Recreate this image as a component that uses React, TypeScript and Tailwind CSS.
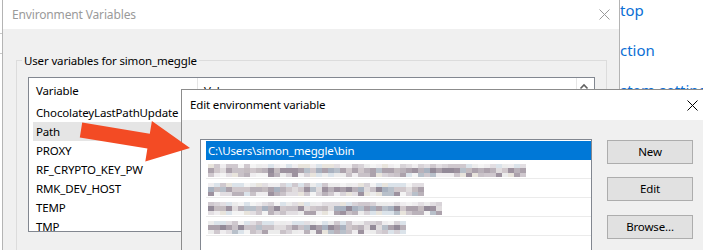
import React from "react";

function rng(seed: number) {
  let s = seed;
  return () => {
    s = (s * 1103515245 + 12345) & 0x7fffffff;
    return s / 0x7fffffff;
  };
}

const light = ["#f4f4f4", "#ececec", "#e2dee2", "#d8d3d8", "#e8e4dc", "#dbe3ea", "#efedef", "#cfc8ce"];
const mid = ["#c9c2c8", "#bab2ba", "#aca2ac", "#9d929f", "#b8c0ca", "#a9b2c0", "#d0c8cc", "#938a98", "#c4bcc0", "#e0dcde"];

function Mosaic({ width, seed }: { width: number; seed: number }) {
  const r = rng(seed);
  const cols = Math.ceil(width / 6);
  const layers = [
    { y: 0, h: 4, pal: light },
    { y: 4, h: 5, pal: mid },
    { y: 9, h: 4, pal: light.concat(mid.slice(0, 5)) },
  ];
  const rects: React.ReactElement[] = [];
  for (let c = 0; c < cols; c++) {
    layers.forEach((l, li) => {
      const col = l.pal[Math.floor(r() * l.pal.length)];
      rects.push(
        <rect key={c + "-" + li} x={c * 6} y={l.y} width={6} height={l.h} fill={col} />
      );
    });
  }
  return (
    <svg width={cols * 6} height={13} className="block">
      {rects}
    </svg>
  );
}

const vars = ["ChocolateyLastPathUpdate", "Path", "PROXY", "RF_CRYPTO_KEY_PW", "RMK_DEV_HOST", "TEMP", "TMP"];

export default function App() {
  return (
    <div className="relative w-[703px] h-[250px] overflow-hidden bg-white font-['Noto_Sans',sans-serif] text-[11.5px] tracking-[-0.15px] text-black leading-none">
      <div className="flex h-full">
        {/* sliver of window behind */}
        <div className="w-[2px] shrink-0 bg-white flex flex-col">
          <div className="mt-[33px] h-px bg-[#c8c8c8]" />
          <div className="mt-[19px] h-px bg-[#c8c8c8]" />
        </div>

        {/* Environment Variables window */}
        <div className="w-[618px] shrink-0 border-x border-[#b4b4b4] flex flex-col overflow-hidden">
          <div className="h-[29px] shrink-0 bg-white flex items-center justify-between pl-[9px]">
            <span className="text-[#9a9a9a] text-[12px]">Environment Variables</span>
            <svg width="11" height="11" className="mr-[9px]">
              <path d="M0.5 0.5 L10.5 10.5 M10.5 0.5 L0.5 10.5" stroke="#9a9a9a" strokeWidth="1" />
            </svg>
          </div>
          <div className="flex-1 bg-[#f0f0f0] pt-[31px] pl-[13px] pr-[12px]">
            <div className="relative border border-[#dcdcdc] h-[260px]">
              <span className="absolute top-[-8px] left-[5px] px-[2px] bg-[#f0f0f0] leading-[16px]">
                User variables for simon_meggle
              </span>
              <div className="mt-[16px] mx-[11px] h-[155px] border border-[#828790] bg-white flex overflow-hidden">
                <div className="flex-1 flex flex-col">
                  <div className="h-[25px] flex shrink-0">
                    <div className="w-[169px] border-r border-[#e5e5e5] pl-[7px] flex items-center">Variable</div>
                    <div className="pl-[6px] flex items-center">Value</div>
                  </div>
                  {vars.map((v) => (
                    <div
                      key={v}
                      className={
                        "h-[19px] shrink-0 ml-[4px] pl-[3px] flex items-center " +
                        (v === "Path" ? "bg-[#e5e5e5]" : "")
                      }
                    >
                      {v}
                    </div>
                  ))}
                </div>
                <div className="w-[18px] border-l border-[#e6e6e6]">
                  <svg width="17" height="17" className="block">
                    <path d="M3.5 10.5 L7 7 L10.5 10.5" stroke="#606060" strokeWidth="1.6" fill="none" />
                  </svg>
                </div>
              </div>
            </div>
          </div>
        </div>

        {/* Settings links behind */}
        <div className="flex-1 bg-white overflow-hidden flex flex-col gap-[20px] text-[15px] tracking-normal text-[#0b6fd5] whitespace-nowrap">
          <div className="h-[20px] shrink-0 flex items-center">top</div>
          <div className="h-[20px] shrink-0 flex items-center">ction</div>
          <div className="h-[20px] shrink-0 flex items-center">stem settings</div>
        </div>
      </div>

      {/* Edit environment variable dialog */}
      <div className="absolute left-[181px] top-[89px] w-[540px] h-[200px] border border-[#8c8c8c] bg-[#f0f0f0] flex flex-col">
        <div className="h-[30px] bg-white flex items-center justify-between pl-[8px] shrink-0">
          <span>Edit environment variable</span>
          <svg width="11" height="11" className="mr-[22px]">
            <path d="M0.5 0.5 L10.5 10.5 M10.5 0.5 L0.5 10.5" stroke="#000" strokeWidth="1" />
          </svg>
        </div>
        <div className="flex items-start pl-[18px] pt-[19px] gap-[15px]">
          <div className="w-[392px] h-[150px] border border-[#828790] bg-white pl-[5px] pt-[1px] flex flex-col">
            <div className="h-[19px] shrink-0 bg-[#0078d7] text-white pl-[2px] flex items-center">
              C:\Users\simon_meggle\bin
            </div>
            {[
              { w: 313, s: 7 },
              { w: 214, s: 19 },
              { w: 229, s: 31 },
              { w: 197, s: 53 },
            ].map((r, i) => (
              <div key={i} className="h-[19px] shrink-0 border-b border-[#ebebeb] pl-[2px] pt-[4px]">
                <Mosaic width={r.w} seed={r.s} />
              </div>
            ))}
          </div>
          <div className="flex flex-col pt-[1px]">
            <button className="w-[86px] h-[24px] border border-[#adadad] bg-[#e1e1e1] flex items-center justify-center">New</button>
            <button className="mt-[13px] w-[86px] h-[24px] border border-[#adadad] bg-[#e1e1e1] flex items-center justify-center">Edit</button>
            <button className="mt-[14px] w-[86px] h-[24px] border border-[#adadad] bg-[#e1e1e1] flex items-center justify-center">Browse...</button>
          </div>
        </div>
      </div>

      {/* red arrow annotation */}
      <svg className="absolute left-0 top-0" width="703" height="250">
        <polygon
          points="82.2,122.6 149.8,133.8 151.9,121.0 190,148 145.3,161.4 147.4,148.6 79.8,137.4"
          fill="#f34b24"
        />
      </svg>
    </div>
  );
}
